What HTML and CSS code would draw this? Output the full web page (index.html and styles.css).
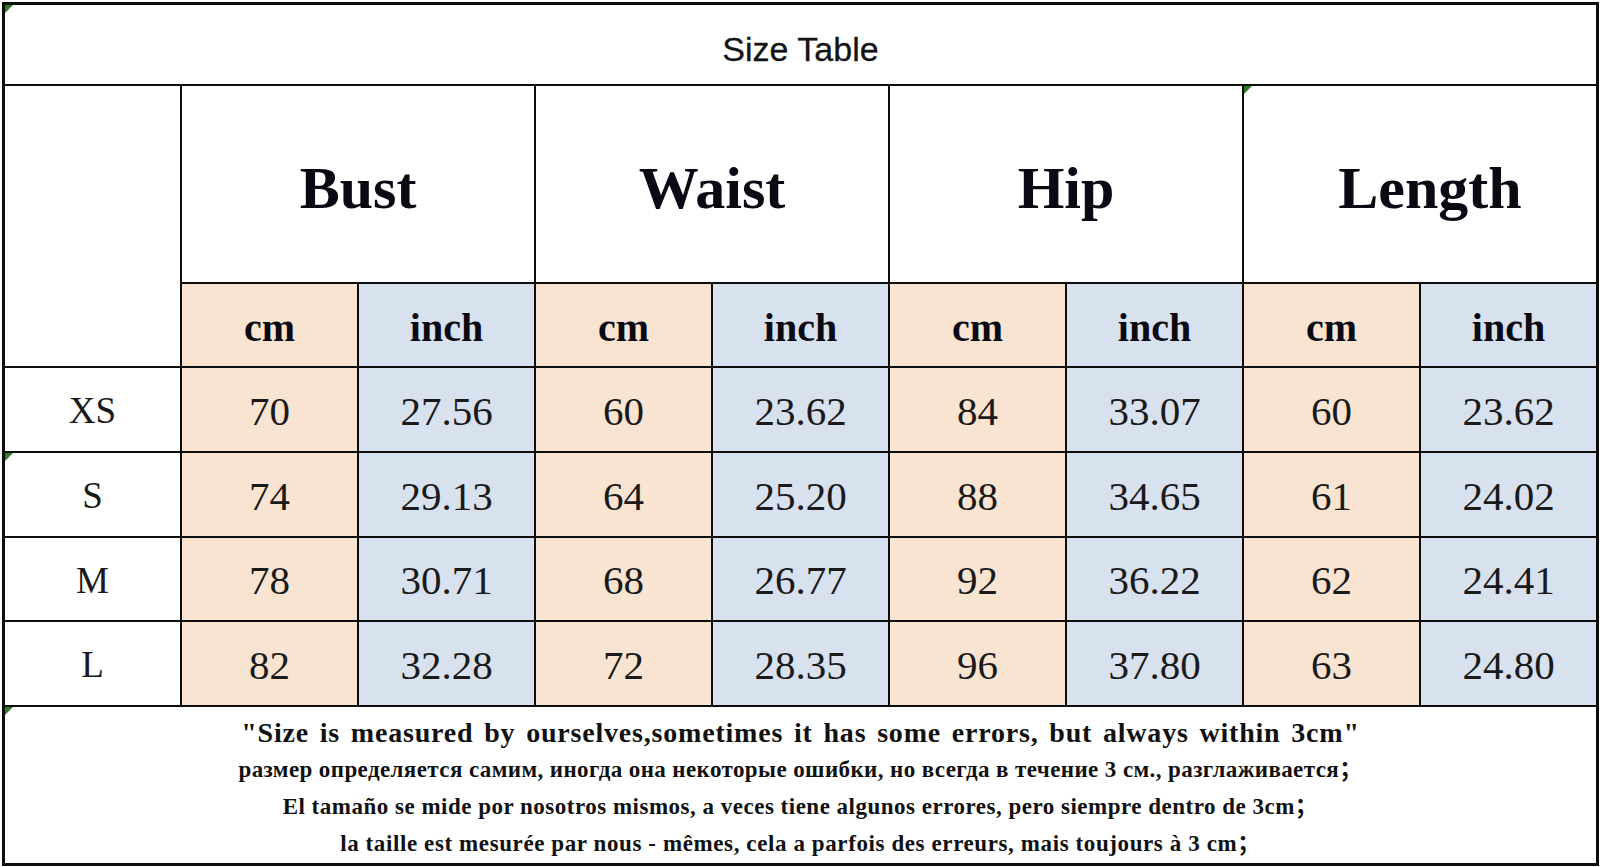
FILE: index.html
```html
<!DOCTYPE html>
<html lang="en">
<head>
<meta charset="utf-8">
<title>Size Table</title>
<link rel="stylesheet" href="styles.css">
</head>
<body>
<div class="sheet">
  <div class="cell title mark">Size Table</div>

  <div class="cell corner"></div>
  <div class="cell head">Bust</div>
  <div class="cell head">Waist</div>
  <div class="cell head">Hip</div>
  <div class="cell head head-length mark">Length</div>

  <div class="cell unit cm">cm</div><div class="cell unit in">inch</div>
  <div class="cell unit cm">cm</div><div class="cell unit in">inch</div>
  <div class="cell unit cm">cm</div><div class="cell unit in">inch</div>
  <div class="cell unit cm">cm</div><div class="cell unit in">inch</div>

  <div class="cell size">XS</div>
  <div class="cell num cm">70</div><div class="cell num in">27.56</div>
  <div class="cell num cm">60</div><div class="cell num in">23.62</div>
  <div class="cell num cm">84</div><div class="cell num in">33.07</div>
  <div class="cell num cm">60</div><div class="cell num in">23.62</div>

  <div class="cell size mark">S</div>
  <div class="cell num cm">74</div><div class="cell num in">29.13</div>
  <div class="cell num cm">64</div><div class="cell num in">25.20</div>
  <div class="cell num cm">88</div><div class="cell num in">34.65</div>
  <div class="cell num cm">61</div><div class="cell num in">24.02</div>

  <div class="cell size">M</div>
  <div class="cell num cm">78</div><div class="cell num in">30.71</div>
  <div class="cell num cm">68</div><div class="cell num in">26.77</div>
  <div class="cell num cm">92</div><div class="cell num in">36.22</div>
  <div class="cell num cm">62</div><div class="cell num in">24.41</div>

  <div class="cell size">L</div>
  <div class="cell num cm">82</div><div class="cell num in">32.28</div>
  <div class="cell num cm">72</div><div class="cell num in">28.35</div>
  <div class="cell num cm">96</div><div class="cell num in">37.80</div>
  <div class="cell num cm">63</div><div class="cell num in">24.80</div>

  <div class="cell notes mark">
    <p class="note-en">"Size is measured by ourselves,sometimes it has some errors, but always within 3cm"</p>
    <p class="note-ru">размер определяется самим, иногда она некоторые ошибки, но всегда в течение 3 см., разглаживается；</p>
    <p class="note-es">El tamaño se mide por nosotros mismos, a veces tiene algunos errores, pero siempre dentro de 3cm；</p>
    <p class="note-fr">la taille est mesurée par nous - mêmes, cela a parfois des erreurs, mais toujours à 3 cm；</p>
  </div>
</div>
</body>
</html>
```

FILE: styles.css
```css
html, body {
  margin: 0;
  padding: 0;
  background: #ffffff;
}

body {
  font-family: "Liberation Serif", "Times New Roman", serif;
  color: #111111;
}

.sheet {
  box-sizing: border-box;
  width: 1597px;
  margin: 2px 0 0 2px;
  padding: 3px;
  background: #0d0d0d;
  display: grid;
  grid-template-columns: repeat(9, 1fr);
  grid-template-rows: 79px 196px 82px 83px 83px 82px 83px 156px;
  gap: 2px;
}

.cell {
  position: relative;
  box-sizing: border-box;
  background: #ffffff;
  display: flex;
  align-items: center;
  justify-content: center;
}

.mark::before {
  content: "";
  position: absolute;
  left: 0;
  top: 0;
  width: 0;
  height: 0;
  border-top: 8px solid #2f7a2a;
  border-right: 8px solid transparent;
}

.title {
  grid-column: 1 / span 9;
  font-family: "Liberation Sans", Arial, sans-serif;
  font-size: 34px;
  color: #141414;
  padding-top: 9px;
  -webkit-text-stroke: 0.3px #141414;
}

.corner {
  grid-row: 2 / span 2;
}

.head {
  grid-column: span 2;
  font-weight: bold;
  font-size: 60px;
  padding-top: 8px;
  color: #0a0a14;
}

.head-length {
  padding-left: 20px;
}

.unit {
  font-weight: bold;
  font-size: 40px;
  color: #0a0a14;
  padding-top: 4px;
}

.cm {
  background: #f8e4d1;
}

.in {
  background: #d8e1ee;
}

.num {
  font-size: 41px;
  color: #1a1a1a;
  padding-top: 2px;
}

.size {
  font-size: 37px;
  color: #1a1a1a;
  padding-top: 2px;
}

.notes {
  grid-column: 1 / span 9;
  flex-direction: column;
  justify-content: flex-start;
  padding: 8px 0 0 0;
  font-weight: bold;
  color: #111111;
}

.notes p {
  margin: 0;
  text-align: center;
  white-space: nowrap;
}

.note-en {
  font-size: 28px;
  line-height: 36px;
  letter-spacing: 0.8px;
  word-spacing: 3px;
}

.note-ru,
.note-es,
.note-fr {
  font-size: 23px;
  line-height: 37px;
  font-family: "Liberation Serif", "Times New Roman", "Noto Sans CJK SC", serif;
}

.note-ru {
  letter-spacing: 0.4px;
}

.note-es {
  letter-spacing: 0.5px;
}

.note-fr {
  letter-spacing: 0.6px;
}
```
